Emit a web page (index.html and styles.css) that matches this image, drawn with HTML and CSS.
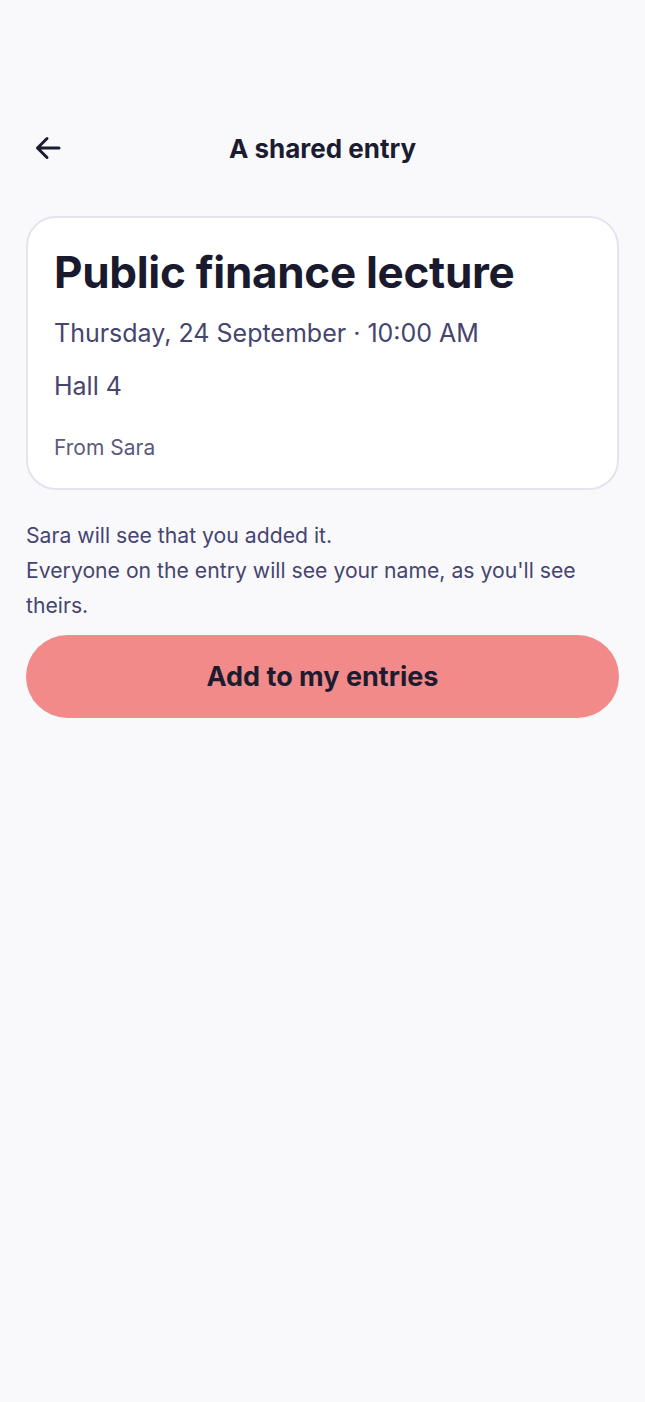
FILE: index.html
```html
<!DOCTYPE html>
<html lang="en">
<head>
<meta charset="utf-8">
<title>A shared entry</title>
<link rel="stylesheet" href="styles.css">
</head>
<body>
<div class="screen">
  <header class="topbar">
    <button class="back" aria-label="Back">
      <svg width="30" height="30" viewBox="0 0 30 30" fill="none" stroke="#1c1c30" stroke-width="3" stroke-linecap="round" stroke-linejoin="round"><path d="M26 15H5M14 5.5L4.5 15L14 24.5"/></svg>
    </button>
    <h1 class="title">A shared entry</h1>
    <span class="spacer"></span>
  </header>
  <section class="card">
    <h2 class="event">Public finance lecture</h2>
    <p class="when">Thursday, 24 September · 10:00 AM</p>
    <p class="where">Hall 4</p>
    <p class="from">From Sara</p>
  </section>
  <p class="note">Sara will see that you added it.<br>Everyone on the entry will see your name, as you'll see theirs.</p>
  <button class="add">Add to my entries</button>
</div>
</body>
</html>
```
FILE: styles.css
```css
html, body { margin: 0; padding: 0; }
body {
  background: #f9f9fc;
  font-family: "Inter", "Noto Sans", sans-serif;
  color: #1c1c30;
}
.screen { padding: 118px 26px 0; min-height: 1402px; box-sizing: border-box; }
.topbar {
  display: flex; align-items: center; justify-content: space-between;
  height: 60px;
}
.back { background: none; border: 0; padding: 0; width: 40px; height: 40px; display: flex; align-items: center; justify-content: flex-start; margin-left: 7px; }
.spacer { width: 47px; }
.title { margin: 0; font-size: 26px; font-weight: 700; color: #1c1c30; }
.card {
  margin-top: 38px;
  background: #fff;
  border: 2px solid #e4e3ef;
  border-radius: 30px;
  padding: 26px 26px 30px;
  height: 274px; box-sizing: border-box;
}
.event { margin: 0; font-size: 44px; font-weight: 700; line-height: 56px; color: #1a1a2e; letter-spacing: -0.3px; }
.when { margin: 16px 0 0; font-size: 25px; line-height: 34px; color: #45456f; }
.where { margin: 19px 0 0; font-size: 25px; line-height: 34px; color: #45456f; }
.from { margin: 31px 0 0; font-size: 21px; line-height: 28px; color: #5b5b7e; }
.note { margin: 28px 0 0; font-size: 21.2px; line-height: 35px; color: #45456f; }
.add {
  display: block; width: 100%; height: 83px; margin-top: 12px;
  background: #f28a8a; border: 0; border-radius: 42px;
  font-family: inherit; font-size: 27px; font-weight: 700; color: #1c1c30;
}
```
